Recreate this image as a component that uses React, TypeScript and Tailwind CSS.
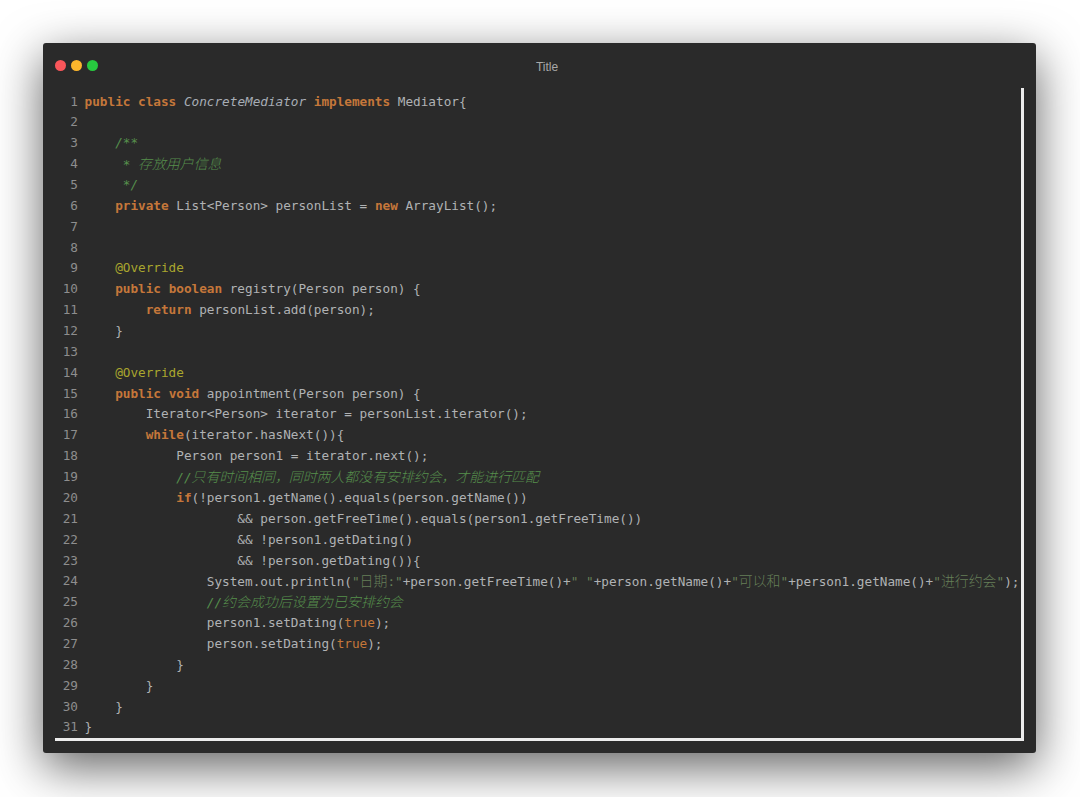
type Kind = "p" | "k" | "n" | "c" | "s" | "a" | "i";
type Tok = [Kind, string];

const kindClass: Record<Kind, string> = {
  p: "text-[#b0b2b4]",
  k: "text-[#c5773a] font-bold",
  n: "text-[#c5773a]",
  c: "text-[#568f4c] italic",
  s: "text-[#667f58]",
  a: "text-[#a9a62e]",
  i: "text-[#a7adb5] italic",
};

const lines: Tok[][] = [
  [["k", "public class "], ["i", "ConcreteMediator "], ["k", "implements "], ["p", "Mediator{"]],
  [],
  [["c", "    /**"]],
  [["c", "     * 存放用户信息"]],
  [["c", "     */"]],
  [["p", "    "], ["k", "private "], ["p", "List<Person> personList = "], ["k", "new "], ["p", "ArrayList();"]],
  [],
  [],
  [["a", "    @Override"]],
  [["p", "    "], ["k", "public boolean "], ["p", "registry(Person person) {"]],
  [["p", "        "], ["k", "return "], ["p", "personList.add(person);"]],
  [["p", "    }"]],
  [],
  [["a", "    @Override"]],
  [["p", "    "], ["k", "public void "], ["p", "appointment(Person person) {"]],
  [["p", "        Iterator<Person> iterator = personList.iterator();"]],
  [["p", "        "], ["k", "while"], ["p", "(iterator.hasNext()){"]],
  [["p", "            Person person1 = iterator.next();"]],
  [["c", "            //只有时间相同，同时两人都没有安排约会，才能进行匹配"]],
  [["p", "            "], ["k", "if"], ["p", "(!person1.getName().equals(person.getName())"]],
  [["p", "                    && person.getFreeTime().equals(person1.getFreeTime())"]],
  [["p", "                    && !person1.getDating()"]],
  [["p", "                    && !person.getDating()){"]],
  [
    ["p", "                System.out.println("],
    ["s", "\"日期:\""],
    ["p", "+person.getFreeTime()+"],
    ["s", "\" \""],
    ["p", "+person.getName()+"],
    ["s", "\"可以和\""],
    ["p", "+person1.getName()+"],
    ["s", "\"进行约会\""],
    ["p", ");"],
  ],
  [["c", "                //约会成功后设置为已安排约会"]],
  [["p", "                person1.setDating("], ["n", "true"], ["p", ");"]],
  [["p", "                person.setDating("], ["n", "true"], ["p", ");"]],
  [["p", "            }"]],
  [["p", "        }"]],
  [["p", "    }"]],
  [["p", "}"]],
];

// CJK runs are set a bit larger, the latin font is narrower than the original
function Token({ kind, text }: { kind: Kind; text: string }) {
  const parts = text.split(/([\u4e00-\u9fff，]+)/);
  return (
    <span className={kindClass[kind]}>
      {parts.map((part, i) =>
        i % 2 === 1 ? (
          <span key={i} className="text-[13.9px] font-light">
            {part}
          </span>
        ) : (
          part
        )
      )}
    </span>
  );
}

export default function App() {
  return (
    <div className="w-[1080px] h-[797px] overflow-hidden bg-white pl-[43px] pt-[43px]">
      <div className="w-[993px] h-[710px] rounded-[3px] bg-[#2a2a2a] shadow-[0_14px_48px_rgba(0,0,0,0.62)] px-[12px]">
        <div className="h-[45px] flex items-center">
          <div className="flex items-center gap-[5px]">
            <span className="w-[11px] h-[11px] rounded-full bg-[#f9565a]" />
            <span className="w-[11px] h-[11px] rounded-full bg-[#fcb62c]" />
            <span className="w-[11px] h-[11px] rounded-full bg-[#27c93f]" />
          </div>
          <div className="flex-1 text-center pr-[28px] pt-[2px] text-[12px] text-[#a8a8a8] font-['Liberation_Sans',sans-serif]">
            Title
          </div>
        </div>
        <div className="w-[969px] h-[653px] border-r-[3px] border-b-[3px] border-[#ececec] pt-[3.6px] font-['DejaVu_Sans_Mono','Noto_Sans_CJK_SC',monospace] text-[12.7px]">
          {lines.map((tokens, i) => (
            <div key={i} className="flex h-[20.87px] leading-[20.87px] whitespace-pre">
              <span className="w-[23px] shrink-0 text-right text-[#8e8e8e]">{i + 1}</span>
              <span className="ml-[6.6px]">
                {tokens.map((t, j) => (
                  <Token key={j} kind={t[0]} text={t[1]} />
                ))}
              </span>
            </div>
          ))}
        </div>
      </div>
    </div>
  );
}
